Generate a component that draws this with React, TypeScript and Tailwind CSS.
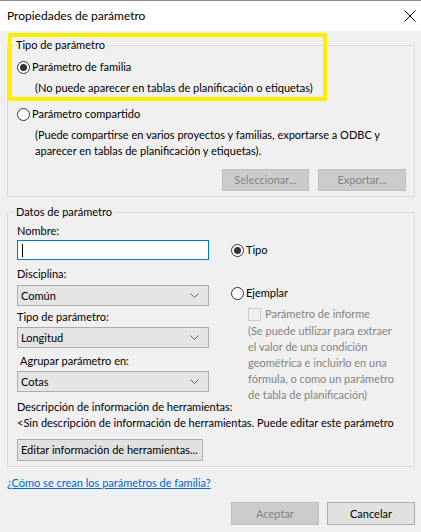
import React from 'react';

const font = "font-['Lato','Liberation_Sans',sans-serif]";

const Radio: React.FC<{ checked?: boolean }> = ({ checked }) => (
  <span className="w-[13px] h-[13px] rounded-full border border-[#333333] bg-white flex items-center justify-center shrink-0">
    {checked && <span className="w-[7px] h-[7px] rounded-full bg-[#333333]" />}
  </span>
);

const Select: React.FC<{ value: string }> = ({ value }) => (
  <div className="h-[21px] w-[192px] bg-[#e5e5e5] border border-[#acacac] flex items-center justify-between pl-[3px] pr-[9px]">
    <span>{value}</span>
    <svg width="9" height="6" viewBox="0 0 9 6" className="text-[#606060]">
      <path d="M0.5 0.5 L4.5 4.5 L8.5 0.5" fill="none" stroke="currentColor" strokeWidth="1" />
    </svg>
  </div>
);

const App: React.FC = () => {
  return (
    <div className={`${font} text-[11px] leading-[16px] text-black w-[421px] h-[532px] bg-[#f0f0f0] relative overflow-hidden whitespace-nowrap`}>
      {/* title bar */}
      <div className="h-[31px] bg-white border-t border-[#8a8a8a] flex items-center justify-between pl-[7px] pr-[5px]">
        <span className="text-[12px]">Propiedades de parámetro</span>
        <svg width="12" height="12" viewBox="0 0 12 12">
          <path d="M0.5 0.5 L11.5 11.5 M11.5 0.5 L0.5 11.5" stroke="#000" strokeWidth="1" />
        </svg>
      </div>

      <div className="pl-[7px] pr-[6px]">
        {/* Tipo de parámetro */}
        <fieldset className="mt-[6px] border border-[#dcdcdc] p-0 m-0">
          <legend className="ml-[6px] px-[2px] leading-[16px]">Tipo de parámetro</legend>
          <div className="pl-[9px] pr-[8px] pb-[5px]">
            <div className="mt-[6px] h-[16px] flex items-center gap-[2px]">
              <Radio checked />
              <span>Parámetro de familia</span>
            </div>
            <div className="mt-[5px] h-[16px] pl-[18px]">(No puede aparecer en tablas de planificación o etiquetas)</div>
            <div className="mt-[10px] h-[16px] flex items-center gap-[2px]">
              <Radio />
              <span>Parámetro compartido</span>
            </div>
            <div className="mt-[5px] pl-[18px]">
              <div className="h-[16px]">(Puede compartirse en varios proyectos y familias, exportarse a ODBC y</div>
              <div className="h-[16px]">aparecer en tablas de planificación y etiquetas).</div>
            </div>
            <div className="mt-[10px] flex justify-end gap-[9px]">
              <button className="w-[87px] h-[22px] bg-[#cccccc] border border-[#bfbfbf] text-[#838383]">Seleccionar...</button>
              <button className="w-[88px] h-[22px] bg-[#cccccc] border border-[#bfbfbf] text-[#838383]">Exportar...</button>
            </div>
          </div>
        </fieldset>

        {/* Datos de parámetro */}
        <fieldset className="mt-[7px] border border-[#dcdcdc] p-0 m-0">
          <legend className="ml-[6px] px-[2px] leading-[16px]">Datos de parámetro</legend>
          <div className="pl-[9px] pr-[8px] pb-[5px]">
            <div className="flex gap-[22px] h-[172px] items-start">
              <div className="flex flex-col w-[192px]">
                <div className="mt-[3px] h-[16px]">Nombre:</div>
                <div className="mt-[1px] h-[20px] bg-white border border-[#0078d7] flex items-center pl-[4px]">
                  <span className="w-[1px] h-[13px] bg-black" />
                </div>
                <div className="mt-[6px] h-[16px]">Disciplina:</div>
                <div className="mt-[3px]"><Select value="Común" /></div>
                <div className="mt-[3px] h-[16px]">Tipo de parámetro:</div>
                <div className="mt-[2px]"><Select value="Longitud" /></div>
                <div className="mt-[5px] h-[16px] pl-[3px]">Agrupar parámetro en:</div>
                <div className="mt-[2px]"><Select value="Cotas" /></div>
              </div>
              <div className="flex flex-col">
                <div className="mt-[22px] h-[16px] flex items-center gap-[2px]">
                  <Radio checked />
                  <span>Tipo</span>
                </div>
                <div className="mt-[27px] h-[16px] flex items-center gap-[2px]">
                  <Radio />
                  <span>Ejemplar</span>
                </div>
                <div className="pl-[17px]">
                  <div className="mt-[5px] h-[16px] flex items-center gap-[4px] text-[#838383]">
                    <span className="w-[13px] h-[13px] border border-[#cccccc] bg-[#f0f0f0]" />
                    <span>Parámetro de informe</span>
                  </div>
                  <div className="mt-[1px] text-[#838383]">
                    <div className="h-[16px]">(Se puede utilizar para extraer</div>
                    <div className="h-[16px]">el valor de una condición</div>
                    <div className="h-[16px]">geométrica e incluirlo en una</div>
                    <div className="h-[16px]">fórmula, o como un parámetro</div>
                    <div className="h-[16px]">de tabla de planificación)</div>
                  </div>
                </div>
              </div>
            </div>
            <div className="mt-[7px] h-[16px]">Descripción de información de herramientas:</div>
            <div className="h-[16px]">&lt;Sin descripción de información de herramientas. Puede editar este parámetro</div>
            <button className="mt-[8px] h-[22px] w-[186px] bg-[#e1e1e1] border border-[#adadad] text-left pl-[3px] block">
              Editar información de herramientas...
            </button>
          </div>
        </fieldset>

        <div className="mt-[8px] h-[16px]">
          <a href="#" className="text-[#0066cc] underline">¿Cómo se crean los parámetros de familia?</a>
        </div>

        <div className="mt-[11px] flex justify-end gap-[8px]">
          <button className="w-[88px] h-[23px] bg-[#cccccc] border border-[#bfbfbf] text-[#838383]">Aceptar</button>
          <button className="w-[88px] h-[23px] bg-[#e1e1e1] border border-[#adadad]">Cancelar</button>
        </div>
      </div>

      {/* yellow highlight */}
      <div className="absolute left-[8px] top-[33px] w-[319px] h-[68px] border-[4px] border-[#ffef00] pointer-events-none" />
    </div>
  );
};

export default App;
